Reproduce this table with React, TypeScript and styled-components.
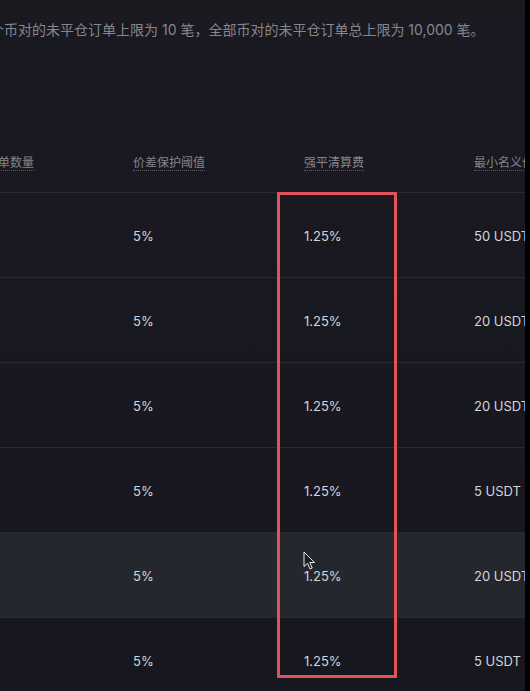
import React from "react";
import styled, { createGlobalStyle } from "styled-components";

const Global = createGlobalStyle`
  html, body { margin: 0; padding: 0; background: #18181f; }
  * { box-sizing: border-box; }
`;

const Page = styled.div`
  width: 530px;
  height: 691px;
  display: flex;
  overflow: hidden;
  background: #18181f;
  font-family: Inter, "Noto Sans CJK SC", sans-serif;
`;

const Viewport = styled.div`
  position: relative;
  flex: 1;
  overflow: hidden;
  background: linear-gradient(#1a1b1e 0px, #1a1b1e 16px, #1a1921 17px, #17171f 100%);
`;

const Edge = styled.div`
  width: 5px;
  flex: none;
  background: #000;
`;

const Notice = styled.p`
  margin: 20px 0 0 -10px;
  white-space: nowrap;
  font-size: 14px;
  line-height: 20px;
  color: #85878d;
  font-family: Inter, "Noto Sans CJK SC", sans-serif;
`;

const Table = styled.div`
  margin-top: 93px;
  margin-left: -38px;
  width: 700px;
`;

const Row = styled.div<{ $hover?: boolean; $head?: boolean }>`
  display: grid;
  grid-template-columns: 171px 171px 170px 171px;
  align-items: center;
  height: ${(p) => (p.$head ? "60px" : "85px")};
  border-bottom: 1px solid #2a2b32;
  background: ${(p) => (p.$hover ? "#25272e" : "transparent")};
`;

const HeadCell = styled.div`
  display: flex;
`;

const HeadLabel = styled.span`
  font-size: 12px;
  line-height: 16px;
  color: #84868c;
  border-bottom: 1px dotted #5e6066;
  white-space: nowrap;
  font-family: "Noto Sans CJK SC", sans-serif;
`;

const Cell = styled.div`
  font-size: 13px;
  line-height: 16px;
  padding-top: 1px;
  color: #d3d5d9;
  white-space: nowrap;
`;

const Highlight = styled.div`
  position: absolute;
  left: 277px;
  top: 192px;
  width: 120px;
  height: 486px;
  border: 3px solid #e3525b;
  border-radius: 1px;
  pointer-events: none;
`;

const Cursor = styled.svg`
  position: absolute;
  left: 303px;
  top: 551px;
`;

const heads = ["最大挂单数量", "价差保护阈值", "强平清算费", "最小名义价值"];
const rows = [
  ["200", "5%", "1.25%", "50 USDT"],
  ["200", "5%", "1.25%", "20 USDT"],
  ["200", "5%", "1.25%", "20 USDT"],
  ["200", "5%", "1.25%", "5 USDT"],
  ["200", "5%", "1.25%", "20 USDT"],
  ["200", "5%", "1.25%", "5 USDT"],
];

export default function App() {
  return (
    <>
      <Global />
      <Page>
        <Viewport>
          <Notice>个币对的未平仓订单上限为 10 笔，全部币对的未平仓订单总上限为 10,000 笔。</Notice>
          <Table>
            <Row $head>
              {heads.map((h) => (
                <HeadCell key={h}>
                  <HeadLabel>{h}</HeadLabel>
                </HeadCell>
              ))}
            </Row>
            {rows.map((r, i) => (
              <Row key={i} $hover={i === 4}>
                {r.map((c, j) => (
                  <Cell key={j}>{c}</Cell>
                ))}
              </Row>
            ))}
          </Table>
          <Highlight />
          <Cursor width="13" height="20" viewBox="0 0 13 20">
            <path
              d="M1 1 L1 15.5 L4.5 12.3 L7 18 L9.2 17 L6.8 11.5 L11.5 11.5 Z"
              fill="#1b1c22"
              stroke="#e8e8ea"
              strokeWidth="1"
              strokeLinejoin="round"
            />
          </Cursor>
        </Viewport>
        <Edge />
      </Page>
    </>
  );
}
